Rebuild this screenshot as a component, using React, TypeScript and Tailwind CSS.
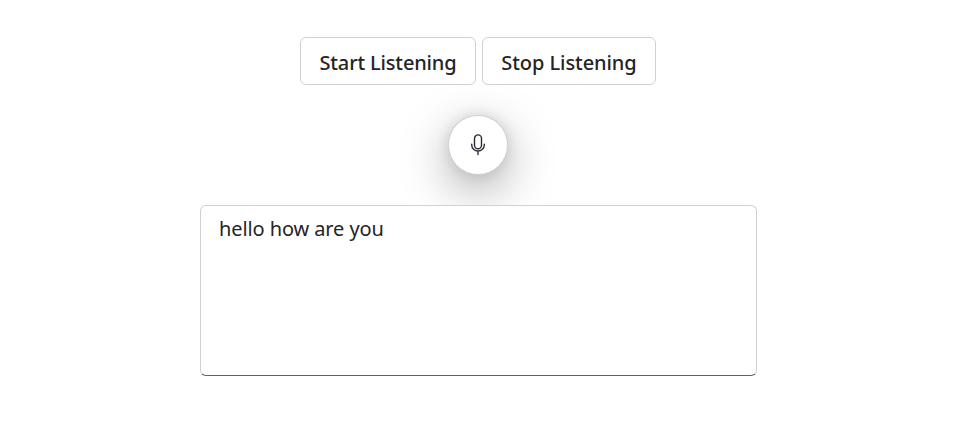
import type { ReactNode } from 'react';

function ActionButton({ children, className }: { children: ReactNode; className: string }) {
  return (
    <button
      className={`h-12 rounded-[6px] border border-[#d1d1d1] bg-white pt-[3px] text-[20px] leading-[30px] font-medium whitespace-nowrap text-[#242424] ${className}`}
    >
      {children}
    </button>
  );
}

function MicIcon() {
  return (
    <svg width="16" height="22" viewBox="0 0 16 22" fill="none" stroke="#2b2b38" strokeWidth="1.4" strokeLinecap="round">
      <rect x="4.5" y="0.9" width="7" height="13.8" rx="3.5" />
      <path d="M1.7 10.3v.8a6.3 5.9 0 0 0 12.6 0v-.8M8 17.1v3.4" />
    </svg>
  );
}

export default function App() {
  return (
    <main className="flex h-[445px] w-[964px] flex-col items-center bg-white pt-[37px] pr-[8px] font-['Noto_Sans','Open_Sans',sans-serif]">
      <div className="flex gap-[6px]">
        <ActionButton className="w-[176px] tracking-[-0.15px]">Start Listening</ActionButton>
        <ActionButton className="w-[174px] tracking-[-0.07px]">Stop Listening</ActionButton>
      </div>
      <button
        aria-label="Microphone"
        className="mt-[30px] flex h-[60px] w-[60px] items-center justify-center rounded-full border border-[#d1d1d1] bg-white shadow-[0_0_14px_rgba(0,0,0,0.12),0_15px_48px_rgba(0,0,0,0.34)]"
      >
        <MicIcon />
      </button>
      <textarea
        defaultValue="hello how are you"
        className="relative mt-[30px] ml-px h-[171px] w-[557px] resize-none rounded-[6px] border border-[#d1d1d1] border-b-[#616161] bg-white px-[18px] pt-[8px] text-[20px] leading-[30px] tracking-[-0.1px] text-[#242424] outline-none"
      />
    </main>
  );
}
